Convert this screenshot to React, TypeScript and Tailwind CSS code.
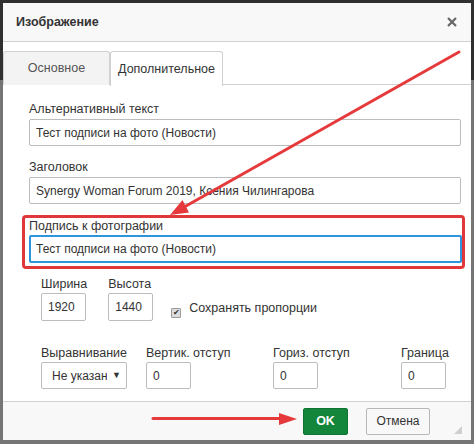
import React from 'react';

const font = { fontFamily: '"Liberation Sans", Arial, sans-serif' };

const TextInput: React.FC<{ value: string; className?: string }> = ({ value, className = '' }) => (
    <div className={`flex items-center h-[27px] border border-[#bcbcbc] rounded-[2px] bg-white pl-[6px] text-[12px] text-[#333] overflow-hidden whitespace-nowrap ${className}`}>
        {value}
    </div>
);

const Label: React.FC<{ children: React.ReactNode }> = ({ children }) => (
    <div className="h-4 leading-4 text-[12.5px] text-[#333] whitespace-nowrap">{children}</div>
);

const Arrows: React.FC = () => (
    <svg className="absolute inset-0 pointer-events-none" width="474" height="444" viewBox="0 0 474 444">
        <line x1="459" y1="52" x2="186" y2="206" stroke="#e5393b" strokeWidth="3" strokeLinecap="round" />
        <polygon points="170,215 189,212.5 182.5,200" fill="#e5393b" />
        <line x1="153" y1="418.5" x2="282" y2="418.5" stroke="#e5393b" strokeWidth="3" strokeLinecap="round" />
        <polygon points="297,419 279,413 279,425" fill="#e5393b" />
    </svg>
);

const App: React.FC = () => {
    return (
        <div
            className="relative w-[474px] h-[444px] pt-[3px] px-[3px] pb-[4px] bg-[linear-gradient(to_bottom,#303030_0px,#303030_80px,#757575_80px)]"
            style={font}
        >
            <div className="flex flex-col h-full bg-white">
                {/* header */}
                <div className="flex items-center justify-between h-[39px] px-[13px] bg-[#f8f8f8] border-b border-[#d1d1d1]">
                    <span className="text-[12.5px] font-bold text-[#333]">Изображение</span>
                    <svg width="10" height="10" viewBox="0 0 10 10" className="mr-[1px]">
                        <path d="M1 1 L9 9 M9 1 L1 9" stroke="#666" strokeWidth="2.2" />
                    </svg>
                </div>

                {/* tabs */}
                <div className="flex mt-[9px] h-[34px] border-b border-[#d1d1d1]">
                    <div className="flex items-center justify-center w-[107px] h-[34px] bg-[#f3f3f3] border border-[#d1d1d1] border-b-0 rounded-t-[3px] text-[12.5px] text-[#555]">
                        Основное
                    </div>
                    <div className="flex items-center justify-center w-[113px] h-[35px] bg-white border border-[#d1d1d1] border-b-0 rounded-t-[3px] text-[12.5px] text-[#333]">
                        Дополнительное
                    </div>
                </div>

                {/* panel */}
                <div className="flex-1 flex flex-col pl-[26px] pr-[10px] pt-[16px]">
                    <Label>Альтернативный текст</Label>
                    <TextInput value="Тест подписи на фото (Новости)" className="mt-[2px] w-[432px]" />

                    <div className="mt-[13px]">
                        <Label>Заголовок</Label>
                    </div>
                    <TextInput value="Synergy Woman Forum 2019, Ксения Чилингарова" className="mt-[2px] w-[432px]" />

                    <div className="mt-[11px] -ml-[7px] w-[443px] h-[54px] border-[3px] border-[#e0383a] rounded-[4px] pl-[4px] pr-[1px]">
                        <Label>Подпись к фотографии</Label>
                        <div className="mt-[1px] flex items-center h-[28px] w-[433px] border-2 border-[#2d95de] rounded-[2px] bg-white pl-[5px] text-[12px] text-[#333] whitespace-nowrap">
                            Тест подписи на фото (Новости)
                        </div>
                    </div>

                    {/* size row */}
                    <div className="mt-[7px] ml-[12px] flex items-start">
                        <div className="flex flex-col">
                            <Label>Ширина</Label>
                            <TextInput value="1920" className="mt-[1px] w-[45px] h-[28px]" />
                        </div>
                        <div className="flex flex-col ml-[21px]">
                            <Label>Высота</Label>
                            <TextInput value="1440" className="mt-[1px] w-[45px] h-[28px]" />
                        </div>
                        <div className="flex items-start ml-[18px] mt-[24px]">
                            <span className="mt-[8px] flex items-center justify-center w-[10px] h-[10px] border border-[#9a9a9a] bg-[#dcdcdc] rounded-[1px] text-[8px] leading-none text-[#333]">
                                ✔
                            </span>
                            <span className="ml-[8px] text-[12.5px] leading-4 text-[#333]">Сохранять пропорции</span>
                        </div>
                    </div>

                    {/* align row */}
                    <div className="mt-[24px] ml-[12px] grid grid-cols-[105px_127px_128px_auto]">
                        <div className="flex flex-col">
                            <Label>Выравнивание</Label>
                            <div className="mt-[1px] flex items-center justify-between w-[86px] h-[27px] border border-[#bcbcbc] rounded-[2px] bg-white pl-[10px] pr-[5px] text-[12px] text-[#333] overflow-hidden whitespace-nowrap">
                                <span className="w-[55px] overflow-hidden">Не указан</span>
                                <span className="text-[9px]">▼</span>
                            </div>
                        </div>
                        <div className="flex flex-col">
                            <Label>Вертик. отступ</Label>
                            <TextInput value="0" className="mt-[1px] w-[45px]" />
                        </div>
                        <div className="flex flex-col">
                            <Label>Гориз. отступ</Label>
                            <TextInput value="0" className="mt-[1px] w-[45px]" />
                        </div>
                        <div className="flex flex-col">
                            <Label>Граница</Label>
                            <TextInput value="0" className="mt-[1px] w-[45px]" />
                        </div>
                    </div>
                </div>

                {/* footer */}
                <div className="relative flex items-center justify-end h-[39px] bg-[#f8f8f8] border-t border-[#d1d1d1] pr-[41px]">
                    <button className="w-[45px] h-[27px] bg-[#13863c] border border-[#0f7433] rounded-[2px] text-white text-[12.5px] font-bold">
                        OK
                    </button>
                    <button className="ml-[18px] w-[64px] h-[27px] bg-[#f8f8f8] border border-[#b8b8b8] rounded-[2px] text-[#333] text-[12px]">
                        Отмена
                    </button>
                    <svg className="absolute right-[9px] bottom-[6px]" width="8" height="8" viewBox="0 0 8 8">
                        <polygon points="8,0 8,8 0,8" fill="#cfcfcf" />
                    </svg>
                </div>
            </div>
            <Arrows />
        </div>
    );
};

export default App;
